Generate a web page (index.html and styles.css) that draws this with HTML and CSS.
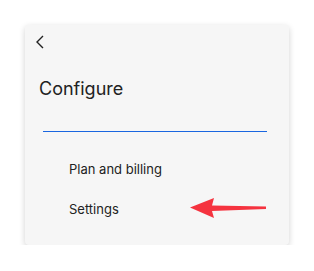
FILE: index.html
```html
<!DOCTYPE html>
<html>
<head>
<meta charset="utf-8">
<link rel="stylesheet" href="styles.css">
</head>
<body>
<div class="card">
  <div class="back">
    <svg width="10" height="14" viewBox="0 0 10 14"><path d="M8 1 L2 7 L8 13" fill="none" stroke="#222" stroke-width="1.4"/></svg>
  </div>
  <h1 class="title">Configure</h1>
  <div class="divider"></div>
  <ul class="menu">
    <li>Plan and billing</li>
    <li>Settings</li>
  </ul>
  <svg class="arrow" width="80" height="24" viewBox="0 0 80 24"><path d="M0 10.5 L24 1 L22 8.5 L76 9.5 L76 12 L22 14 L24 21 Z" fill="#f5333f"/></svg>
</div>
</body>
</html>
```
FILE: styles.css
```css
html, body { margin: 0; padding: 0; background: #fff; }
body { font-family: Inter, "Noto Sans", sans-serif; color: #222; }
.card {
  position: relative;
  margin: 25px 0 0 25px;
  width: 264px;
  height: 220px;
  box-sizing: border-box;
  background: #f6f6f6;
  border-radius: 4px;
  box-shadow: 0 2px 6px rgba(0,0,0,0.18);
  padding: 10px 0 0 0;
}
.back { padding-left: 10px; height: 14px; line-height: 0; }
.title {
  margin: 28px 0 0 14px;
  font-size: 18px;
  font-weight: 400;
  line-height: 24px;
}
.divider {
  margin: 30px 22px 0 18px;
  height: 1px;
  background: #1a66e0;
}
.menu { list-style: none; margin: 29px 0 0 44px; padding: 0; font-size: 13px; }
.menu li { height: 40px; line-height: 16px; }
.arrow { position: absolute; left: 165px; top: 172px; }
```
